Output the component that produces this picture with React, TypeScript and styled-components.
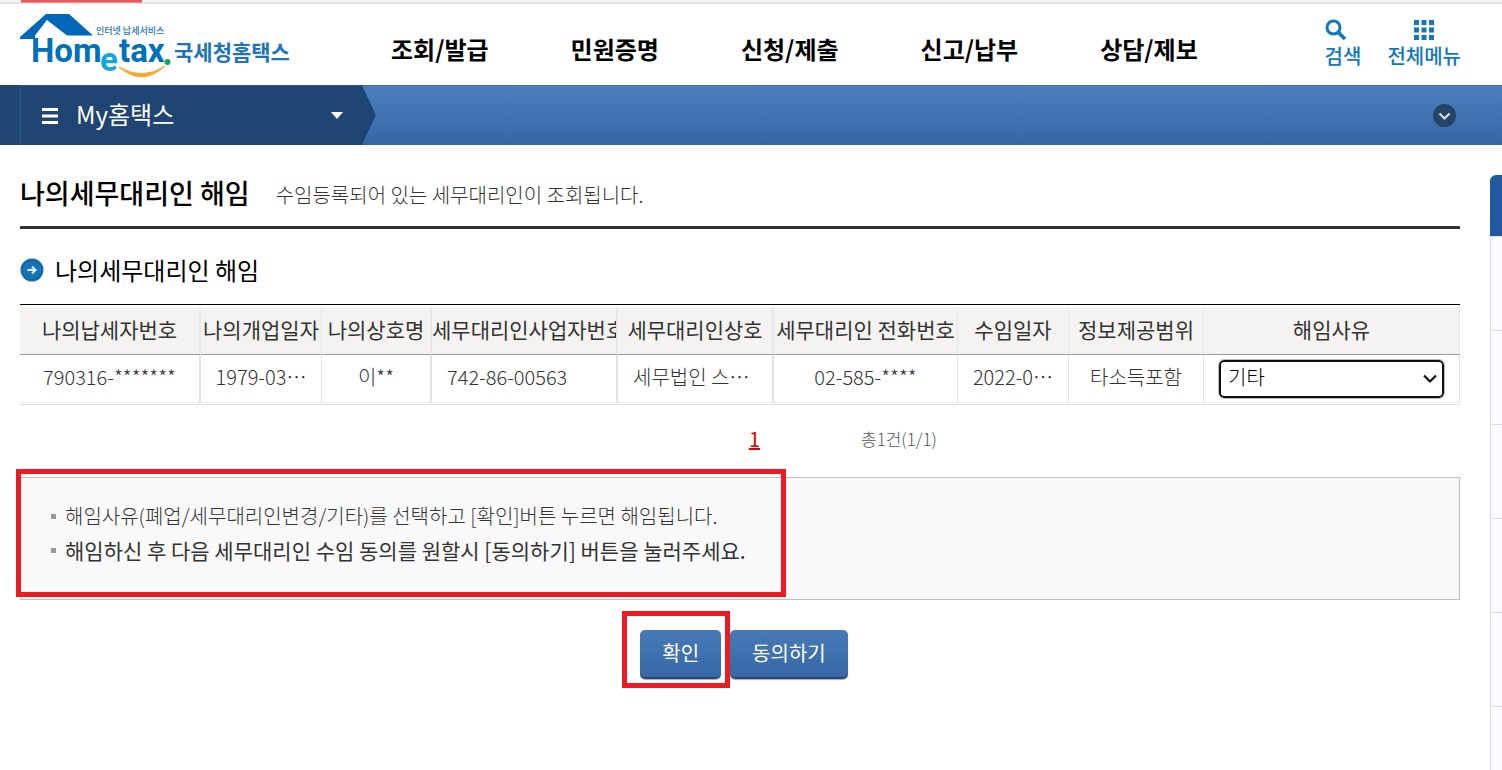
import React from "react";
import styled, { createGlobalStyle } from "styled-components";

const GlobalStyle = createGlobalStyle`
  * { box-sizing: border-box; }
  body {
    margin: 0;
    background: #fff;
    color: #333;
    font-family: "Noto Sans CJK KR", "Noto Sans", sans-serif;
    font-size: 20px;
    font-weight: 300;
  }
  h1, h2, p, ul { margin: 0; padding: 0; }
  ul { list-style: none; }
  a { color: inherit; text-decoration: none; }
  button, select { font: inherit; }
`;

const Page = styled.div`
  min-height: 100vh;
  display: flex;
  flex-direction: column;
`;

const TopStrip = styled.div`
  height: 4px;
  padding-left: 21px;
  background: #f5f5f5;
  border-bottom: 2px solid #e3e3e3;
`;

const ActiveTab = styled.div`
  width: 121px;
  height: 3px;
  background: #ee5555;
  border-bottom: 1px solid #d99;
`;

const Header = styled.header`
  height: 81px;
  padding: 0 41px 0 20px;
  display: flex;
  align-items: center;
  justify-content: space-between;
`;

const HeaderLeft = styled.div`
  display: flex;
  align-items: center;
  gap: 101px;
`;

const LogoLink = styled.a`
  display: block;
  width: 270px;
  height: 70px;
`;

const MainNav = styled.nav`
  display: flex;
  gap: 82px;
  color: #000;
  font-size: 24px;
  font-weight: 700;
  line-height: 36px;
  padding-top: 8px;
`;

const Tools = styled.div`
  display: flex;
  gap: 26px;
`;

const ToolButton = styled.button<{ $align: string }>`
  padding: 0 0 2px;
  border: 0;
  background: none;
  color: #0f77bd;
  display: flex;
  flex-direction: column;
  align-items: ${(p) => p.$align};
  gap: 2px;
  font-weight: 500;
  line-height: 26px;
`;

const MenuBar = styled.div`
  height: 60px;
  display: flex;
  align-items: center;
  justify-content: space-between;
  padding-right: 46px;
  background: linear-gradient(#4b80bd, #3667a5);
  box-shadow: inset 0 1px #40719f;
`;

const Crumb = styled.div`
  display: flex;
  height: 60px;
`;

const CrumbEdge = styled.div`
  width: 21px;
  background: #204774;
  border-right: 1px solid #275790;
`;

const CrumbButton = styled.button`
  width: 340px;
  padding: 0 18px 0 21px;
  border: 0;
  border-top: 1px solid #27568c;
  background: #204573;
  color: #fff;
  display: flex;
  align-items: center;
  gap: 18px;
  font-size: 24px;
  font-weight: 400;
  line-height: 36px;
  span { flex: 1; padding-bottom: 4px; text-align: left; }
`;

const RoundButton = styled.button`
  padding: 0;
  border: 0;
  background: none;
  display: block;
  height: 23px;
`;

const Body = styled.div`
  flex: 1;
  display: flex;
  gap: 30px;
  padding-left: 20px;
`;

const Main = styled.main`
  flex: 1;
  min-width: 0;
`;

const TitleRow = styled.div`
  display: flex;
  align-items: center;
  gap: 26px;
  padding: 28px 0 13px;
  line-height: 40px;
  border-bottom: 3px solid #333;
  p { padding-top: 4px; line-height: 36px; }
`;

const Title = styled.h1`
  color: #000;
  font-size: 27px;
  font-weight: 500;
`;

const SectionTitle = styled.h2`
  display: flex;
  align-items: center;
  gap: 11px;
  padding: 21px 0 14px;
  color: #000;
  font-size: 24px;
  font-weight: 400;
  line-height: 40px;
`;

const TableFrame = styled.div`
  border-top: 1px solid #000;
  border-bottom: 1px solid #ddd;
  padding: 2px 0 1px;
`;

const Table = styled.table`
  width: 100%;
  table-layout: fixed;
  border-collapse: separate;
  border-spacing: 0;
`;

const HeadCell = styled.th<{ $rule: number }>`
  height: 48px;
  padding: 0 0 4px;
  overflow: hidden;
  background: #f4f3f1;
  border-right: ${(p) => p.$rule}px solid #e8e8e8;
  border-bottom: 1px solid #999;
  font-size: 21px;
  font-weight: 400;
  line-height: 30px;
  white-space: nowrap;
`;

const Cell = styled.td<{ $rule: number; $left?: boolean }>`
  height: 48px;
  padding: 0 ${(p) => (p.$left ? "15px" : "0")} 4px;
  border-right: ${(p) => p.$rule}px solid #e2e2e2;
  border-bottom: 1px solid #e8e8e8;
  line-height: 30px;
  text-align: ${(p) => (p.$left ? "left" : "center")};
  white-space: nowrap;
`;

const SelectBox = styled.div`
  position: relative;
  margin: 4px 15px 0;
  height: 38px;
  svg { position: absolute; right: 7px; top: 14px; pointer-events: none; }
`;

const ReasonSelect = styled.select`
  appearance: none;
  display: block;
  width: 100%;
  height: 38px;
  padding: 0 24px 4px 7px;
  border: 2px solid #101010;
  border-radius: 5px;
  outline: 1px solid #bbb;
  background: #fff;
  color: #000;
  font-size: 20px;
`;

const Pager = styled.nav`
  display: grid;
  grid-template-columns: 1fr 1fr;
  align-items: center;
  height: 72px;
  padding-bottom: 6px;
  column-gap: 100px;
`;

const PageLink = styled.a`
  justify-self: end;
  color: #e00000;
  font-weight: 400;
  text-decoration: underline;
  margin-right: -70px;
`;

const Total = styled.span`
  margin-left: 71px;
  color: #555;
  font-size: 17px;
`;

const Notice = styled.section`
  position: relative;
  border: 1px solid #c0c0c0;
  background: #f9f9f9;
  padding: 21px 30px 32px;
`;

const NoticeItem = styled.li<{ $strong?: boolean }>`
  display: flex;
  align-items: center;
  gap: 9px;
  font-size: ${(p) => (p.$strong ? "21px" : "20px")};
  font-weight: ${(p) => (p.$strong ? 400 : 300)};
  line-height: 34px;
  &::before {
    content: "";
    width: 5px;
    height: 5px;
    background: #999;
  }
`;

const Marker = styled.div<{ $x: number; $y: number; $w: number; $h: number }>`
  position: absolute;
  left: ${(p) => p.$x}px;
  top: ${(p) => p.$y}px;
  width: ${(p) => p.$w}px;
  height: ${(p) => p.$h}px;
  border: 5px solid #ed1c24;
  pointer-events: none;
`;

const Actions = styled.div`
  display: flex;
  justify-content: center;
  gap: 9px;
  padding: 30px 0 30px 8px;
`;

const ActionSlot = styled.div`
  position: relative;
`;

const ActionButton = styled.button`
  display: block;
  height: 49px;
  padding: 0 22px 3px;
  border: 0;
  border-bottom: 2px solid #23497b;
  border-radius: 5px;
  background: linear-gradient(#477ab7, #3868a6);
  box-shadow: 0 1px 1px #aaa;
  color: #fff;
  font-weight: 400;
`;

const QuickRail = styled.aside`
  width: 12px;
  margin-top: 30px;
  display: flex;
  flex-direction: column;
`;

const RailHead = styled.div`
  height: 61px;
  background: #2359a0;
  border-top-left-radius: 6px;
`;

const RailList = styled.div`
  flex: 1;
  border-left: 1px solid #dcdee2;
  border-top: 1px solid #dcdee2;
  padding-left: 1px;
  background: #fafbff;
`;

const RailItem = styled.div`
  height: 94px;
  border-bottom: 1px solid #d8dae0;
`;

const columns = [
  { label: "나의납세자번호", width: 181, rule: 2 },
  { label: "나의개업일자", width: 121, rule: 1 },
  { label: "나의상호명", width: 110, rule: 2 },
  { label: "세무대리인사업자번호", width: 186, rule: 2 },
  { label: "세무대리인상호", width: 156, rule: 2 },
  { label: "세무대리인 전화번호", width: 184, rule: 1 },
  { label: "수임일자", width: 111, rule: 1 },
  { label: "정보제공범위", width: 135, rule: 1 },
  { label: "해임사유", width: 256, rule: 1 },
];

const Logo = () => (
  <svg width="270" height="70" viewBox="20 10 270 70" role="img" aria-label="Hometax 국세청홈택스">
    <path d="M20 37 46 14H69L93 35.500H67L47 20 35 35.500V39H20Z" fill="#0068b7" />
    <g fontFamily="Roboto, sans-serif" fontWeight="700" fontSize="33" fill="#0070bb">
      <text x="31" y="62">Hom</text>
      <text x="119" y="62">tax</text>
      <text x="100" y="71" fill="#16a5df">e</text>
    </g>
    <circle cx="167.500" cy="62" r="3" fill="#0cab4f" />
    <path d="M119 67Q142 87 165 66Q143 81 119 67Z" fill="#f9a72b" stroke="#f9a72b" />
    <g fontFamily="Noto Sans CJK KR, sans-serif" fill="#1d74b8">
      <text x="96" y="34" fontSize="9" fontWeight="500">인터넷 납세서비스</text>
      <text x="174" y="60" fontSize="21" fontWeight="700">국세청홈택스</text>
    </g>
  </svg>
);

const SearchIcon = () => (
  <svg width="22" height="22" viewBox="0 0 22 22" fill="none" stroke="#0f77bd">
    <circle cx="8.500" cy="8.500" r="6.500" strokeWidth="3" />
    <path d="M13 13 20 20" strokeWidth="3.500" />
  </svg>
);

const GridIcon = () => (
  <svg width="20" height="22" viewBox="0 0 20 22" fill="#0f77bd">
    {[1, 8.5, 16].map((y) =>
      [0, 7.5, 15].map((x) => <rect key={`${x}-${y}`} x={x} y={y} width="5" height="5" />)
    )}
  </svg>
);

export default function App() {
  return (
    <>
      <GlobalStyle />
      <Page>
        <TopStrip>
          <ActiveTab />
        </TopStrip>
        <Header>
          <HeaderLeft>
            <LogoLink href="#">
              <Logo />
            </LogoLink>
            <MainNav>
              {["조회/발급", "민원증명", "신청/제출", "신고/납부", "상담/제보"].map((name) => (
                <a href="#" key={name}>{name}</a>
              ))}
            </MainNav>
          </HeaderLeft>
          <Tools>
            <ToolButton $align="flex-start">
              <SearchIcon />
              검색
            </ToolButton>
            <ToolButton $align="center">
              <GridIcon />
              전체메뉴
            </ToolButton>
          </Tools>
        </Header>
        <MenuBar>
          <Crumb>
            <CrumbEdge />
            <CrumbButton>
              <svg width="16" height="16" viewBox="0 0 16 16" fill="#fff">
                <path d="M0 0H16V3H0ZM0 6.500H16V9.500H0ZM0 13H16V16H0Z" />
              </svg>
              <span>My홈택스</span>
              <svg width="12" height="7" viewBox="0 0 12 7">
                <path d="M0 0H12L6 7Z" fill="#fff" />
              </svg>
            </CrumbButton>
            <svg width="15" height="60" viewBox="0 0 15 60">
              <path d="M0 0 14 30 0 60Z" fill="#204573" />
              <path d="M0 0 14 30 0 60" fill="none" stroke="#11497c" strokeWidth="1.500" />
            </svg>
          </Crumb>
          <RoundButton aria-label="펼치기">
            <svg width="23" height="23" viewBox="0 0 23 23">
              <circle cx="11.500" cy="11.500" r="11.500" fill="#264468" />
              <path d="M6.500 9.500 11.500 14.500 16.500 9.500" fill="none" stroke="#d5dde0" strokeWidth="2.200" />
            </svg>
          </RoundButton>
        </MenuBar>
        <Body>
          <Main>
            <TitleRow>
              <Title>나의세무대리인 해임</Title>
              <p>수임등록되어 있는 세무대리인이 조회됩니다.</p>
            </TitleRow>
            <SectionTitle>
              <svg width="24" height="24" viewBox="0 0 24 24">
                <circle cx="12" cy="12" r="11.500" fill="#1673b5" />
                <circle cx="12" cy="12" r="10" fill="none" stroke="#125f9e" />
                <path d="M7.500 12H15M12 8.500 15.500 12 12 15.500" fill="none" stroke="#e4f2fb" strokeWidth="2" />
              </svg>
              나의세무대리인 해임
            </SectionTitle>
            <TableFrame>
              <Table>
                <colgroup>
                  {columns.map((c) => (
                    <col key={c.label} width={c.width} />
                  ))}
                </colgroup>
                <thead>
                  <tr>
                    {columns.map((c) => (
                      <HeadCell key={c.label} scope="col" $rule={c.rule}>{c.label}</HeadCell>
                    ))}
                  </tr>
                </thead>
                <tbody>
                  <tr>
                    <Cell $rule={2}>790316-*******</Cell>
                    <Cell $rule={1}>1979-03⋯</Cell>
                    <Cell $rule={2}>이**</Cell>
                    <Cell $rule={2} $left>742-86-00563</Cell>
                    <Cell $rule={2} $left>세무법인 스⋯</Cell>
                    <Cell $rule={1}>02-585-****</Cell>
                    <Cell $rule={1}>2022-0⋯</Cell>
                    <Cell $rule={1}>타소득포함</Cell>
                    <Cell $rule={1}>
                      <SelectBox>
                        <ReasonSelect aria-label="해임사유" defaultValue="기타">
                          <option>폐업</option>
                          <option>세무대리인변경</option>
                          <option>기타</option>
                        </ReasonSelect>
                        <svg width="14" height="10" viewBox="0 0 14 10">
                          <path d="M1 1.500 7 7.500 13 1.500" fill="none" stroke="#111" strokeWidth="2.200" />
                        </svg>
                      </SelectBox>
                    </Cell>
                  </tr>
                </tbody>
              </Table>
            </TableFrame>
            <Pager>
              <PageLink href="#">1</PageLink>
              <Total>총1건(1/1)</Total>
            </Pager>
            <Notice>
              <ul>
                <NoticeItem>해임사유(폐업/세무대리인변경/기타)를 선택하고 [확인]버튼 누르면 해임됩니다.</NoticeItem>
                <NoticeItem $strong>해임하신 후 다음 세무대리인 수임 동의를 원할시 [동의하기] 버튼을 눌러주세요.</NoticeItem>
              </ul>
              <Marker $x={-5} $y={-9} $w={770} $h={128} />
            </Notice>
            <Actions>
              <ActionSlot>
                <ActionButton>확인</ActionButton>
                <Marker $x={-18} $y={-19} $w={108} $h={77} />
              </ActionSlot>
              <ActionButton>동의하기</ActionButton>
            </Actions>
          </Main>
          <QuickRail>
            <RailHead />
            <RailList>
              {[1, 2, 3, 4, 5].map((n) => (
                <RailItem key={n} />
              ))}
            </RailList>
          </QuickRail>
        </Body>
      </Page>
    </>
  );
}
